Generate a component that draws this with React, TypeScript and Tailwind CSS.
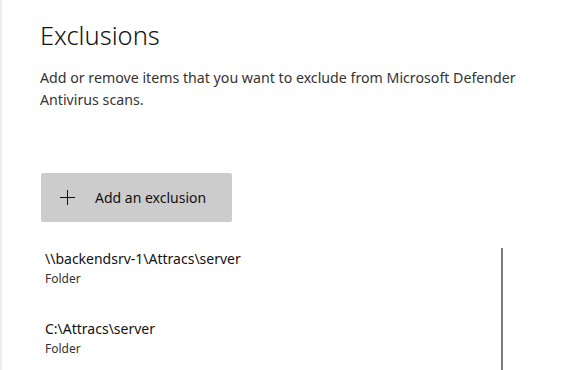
import React from "react";

const items = [
  { path: "\\\\backendsrv-1\\Attracs\\server", kind: "Folder" },
  { path: "C:\\Attracs\\server", kind: "Folder" },
];

export default function App() {
  return (
    <div
      className="w-[577px] h-[370px] overflow-hidden bg-white border-l-2 border-[#ececec] text-black"
      style={{ fontFamily: '"Noto Sans", "Open Sans", sans-serif' }}
    >
      <div className="pl-[38px] pt-[17px]">
        <h1 className="text-[25.5px] font-light leading-[36px] text-[#111]">Exclusions</h1>
        <p className="mt-[14px] w-[510px] text-[14.2px] leading-[22px] text-[#333]">
          Add or remove items that you want to exclude from Microsoft Defender Antivirus scans.
        </p>

        <button className="mt-[62px] ml-px flex h-[49px] w-[191px] items-center rounded-[2px] bg-[#cccccc] text-[14px] text-[#111]">
          <svg className="ml-[19px] h-[15px] w-[15px]" viewBox="0 0 15 15" fill="none" stroke="#111" strokeWidth="1">
            <path d="M7.5 0v15M0 7.5h15" />
          </svg>
          <span className="ml-[20px]">Add an exclusion</span>
        </button>

        <div className="mt-[26px] flex">
          <div className="w-[461px] pl-[5px]">
            {items.map((it) => (
              <div key={it.path} className="h-[70px] pt-px">
                <div className="text-[14px] leading-[20px] text-[#111]">{it.path}</div>
                <div className="mt-px text-[12px] leading-[17px] text-[#333]">{it.kind}</div>
              </div>
            ))}
          </div>
          <div className="h-[200px] w-[2px] bg-[#7a7a7a]" />
        </div>
      </div>
    </div>
  );
}
